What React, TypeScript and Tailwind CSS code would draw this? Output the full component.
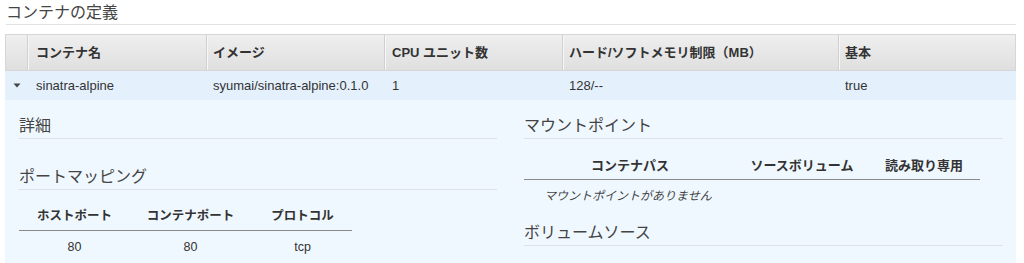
import React from "react";

const font = { fontFamily: '"Liberation Sans", "Noto Sans CJK JP", sans-serif' };

function Heading({ children, className = "" }: { children: React.ReactNode; className?: string }) {
  return (
    <div className={`text-[16px] leading-[20px] text-[#444] pb-[2px] border-b border-[#dce2e7] ${className}`}>
      {children}
    </div>
  );
}

export default function App() {
  const cols = [
    { w: "w-[179px]", pl: "pl-[8px]", head: "コンテナ名", val: "sinatra-alpine" },
    { w: "w-[178px]", pl: "pl-[6px]", head: "イメージ", val: "syumai/sinatra-alpine:0.1.0" },
    { w: "w-[178px]", pl: "pl-[7px]", head: "CPU ユニット数", val: "1" },
    { w: "w-[276px]", pl: "pl-[6px]", head: "ハード/ソフトメモリ制限（MB）", val: "128/--" },
    { w: "flex-1", pl: "pl-[6px]", head: "基本", val: "true" },
  ];
  return (
    <div className="w-[1024px] h-[263px] bg-white overflow-hidden text-[#333]" style={font}>
      <div className="mx-[6px] w-[1010px] h-[25px] border-b border-[#e2e2e2] text-[16px] leading-[20px] pt-[3px] text-[#444]">
        コンテナの定義
      </div>
      <div className="ml-[5px] w-[1011px] mt-[9px]">
        {/* header */}
        <div className="flex h-[37px] border border-[#d6d6d6] bg-gradient-to-b from-[#efefef] to-[#dfdfdf] text-[13px] font-bold text-[#333]">
          <div className="w-[22px] border-r border-[#d0d0d0] shadow-[1px_0_0_#f7f7f7]" />
          {cols.map((c, i) => (
            <div
              key={i}
              className={`${c.w} ${c.pl} flex items-center ${i < cols.length - 1 ? "border-r border-[#d0d0d0] shadow-[1px_0_0_#f7f7f7]" : ""}`}
            >
              {c.head}
            </div>
          ))}
        </div>
        {/* data row */}
        <div className="flex h-[29px] bg-[#e4f1fd] text-[13px] text-[#333]">
          <div className="w-[23px] flex items-center justify-center pl-[1px]">
            <svg width="8" height="5" viewBox="0 0 8 5">
              <path d="M0.5 0.5 L7.5 0.5 L4 4.5 Z" fill="#444" />
            </svg>
          </div>
          {cols.map((c, i) => (
            <div key={i} className={`${c.w} ${c.pl} flex items-center`}>
              {c.val}
            </div>
          ))}
        </div>
        {/* expanded */}
        <div className="flex h-[163px] bg-[#f0f8ff] pl-[14px] pr-[13px] gap-[27px]">
          <div className="w-[478px]">
            <Heading className="mt-[16px]">詳細</Heading>
            <Heading className="mt-[28px]">ポートマッピング</Heading>
            <div className="w-[333px] mt-[13px]">
              <div className="flex h-[28px] border-b border-[#8a8a8a] text-[12.5px] font-bold text-[#333]">
                <div className="w-[111px] flex items-center justify-center">ホストポート</div>
                <div className="w-[121px] flex items-center justify-center">コンテナポート</div>
                <div className="flex-1 flex items-center justify-center pl-[2px]">プロトコル</div>
              </div>
              <div className="flex h-[32px] text-[12.5px] text-[#333]">
                <div className="w-[111px] flex items-center justify-center">80</div>
                <div className="w-[121px] flex items-center justify-center">80</div>
                <div className="flex-1 flex items-center justify-center pl-[2px]">tcp</div>
              </div>
            </div>
          </div>
          <div className="w-[479px]">
            <Heading className="mt-[16px]">マウントポイント</Heading>
            <div className="w-[456px] mt-[14px]">
              <div className="flex h-[27px] border-b border-[#8a8a8a] text-[13px] font-bold text-[#333]">
                <div className="w-[212px] flex items-center justify-center">コンテナパス</div>
                <div className="w-[132px] flex items-center justify-center">ソースボリューム</div>
                <div className="flex-1 flex items-center justify-center">読み取り専用</div>
              </div>
              <div className="h-[32px] flex items-center pl-[20px] text-[12px] italic text-[#444]">
                マウントポイントがありません
              </div>
            </div>
            <Heading className="mt-[11px]">ボリュームソース</Heading>
          </div>
        </div>
      </div>
    </div>
  );
}
